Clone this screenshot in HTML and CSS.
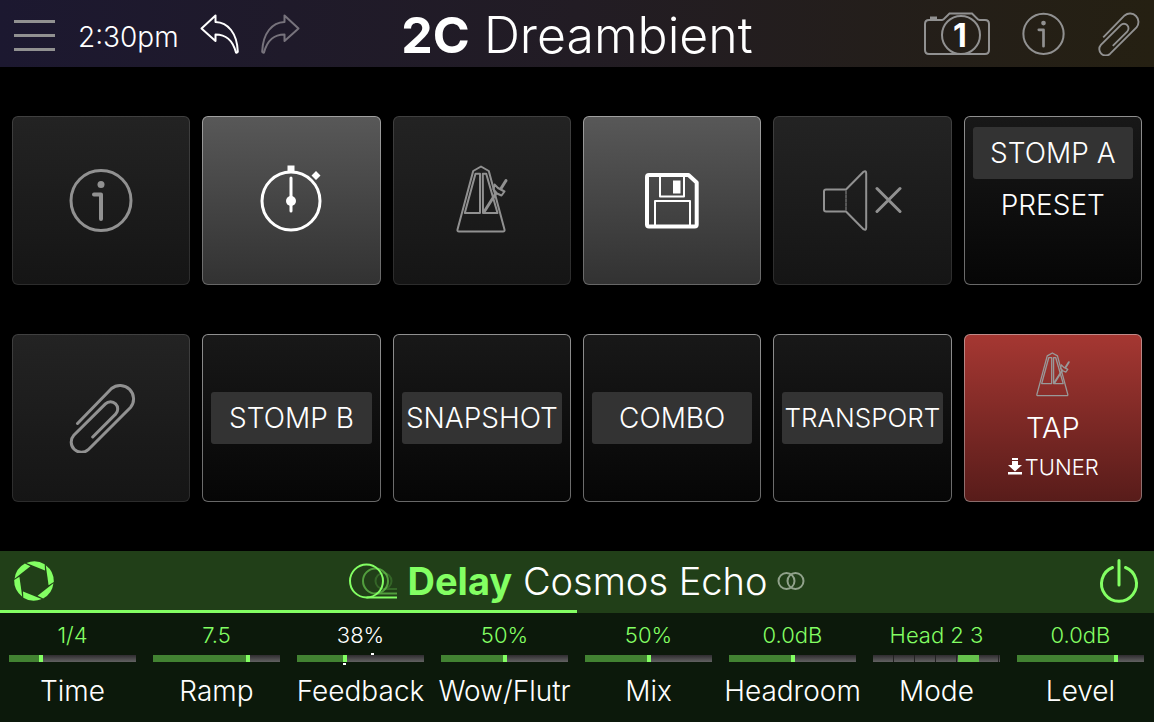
FILE: index.html
```html
<!DOCTYPE html>
<html lang="en">
<head>
<meta charset="utf-8">
<meta name="viewport" content="width=device-width, initial-scale=1">
<title>2C Dreambient</title>
<link rel="stylesheet" href="styles.css">
</head>
<body>
<svg class="defs" aria-hidden="true">
  <symbol id="info" viewBox="0 0 70 70">
    <circle cx="35" cy="35.500" r="30"/>
    <path class="stem" d="M28 29.500h7V54"/>
    <circle class="solid" cx="35" cy="19.500" r="3.500"/>
  </symbol>
  <symbol id="clip" viewBox="-2 0 70 70" overflow="visible">
    <path d="M9.500 40.500 43.500 5.500A13.500 13.500 0 0 1 62.500 24.500L20.200 66.700A10.200 10.200 0 0 1 5.800 52.300L37.400 20.900A7.200 7.200 0 0 1 47.600 31.100L24.700 54"/>
  </symbol>
  <symbol id="metronome" viewBox="0 0 70 70">
    <path d="M34 1.500 41.800 6 57.500 64.500Q58 66.500 56 66.500H12Q10 66.500 10.500 64.500L26.200 6Z"/>
    <path class="fine" d="M28.500 8.700H33V48H17.800ZM35.800 8.700H39.200L50.500 48H36Z"/>
    <path class="arm" d="M37 47 48.500 29"/>
    <path class="fine" d="M47.500 19.500 51 23 57.500 26.500 54.500 30.500 50 28.500 46.500 24.500Z"/>
    <path class="arm" d="M54 23.500 59 15.500"/>
  </symbol>
</svg>

<header class="topbar">
  <div class="side">
    <button class="icon-btn menu" aria-label="Menu"><span></span><span></span><span></span></button>
    <time class="clock">2:30pm</time>
    <button class="icon-btn undo" aria-label="Undo">
      <svg width="40" height="40" viewBox="0 0 40 40"><path d="M1.500 14.500 15.500 1.500V8C28 8.500 37 19 37.800 37.500Q37.500 39 36 38.500C32.500 25.500 26 20.500 15.500 20.500V27Z"/></svg>
    </button>
    <button class="icon-btn redo" aria-label="Redo">
      <svg width="40" height="40" viewBox="0 0 40 40"><path d="M38.500 14.500 24.500 1.500V8C12 8.500 3 19 2.200 37.500Q2.500 39 4 38.500C7.500 25.500 14 20.500 24.500 20.500V27Z"/></svg>
    </button>
  </div>
  <h1 class="preset-name"><b>2C</b> Dreambient</h1>
  <div class="side side-end">
    <button class="icon-btn camera" aria-label="Snapshot 1">
      <svg width="68" height="44" viewBox="0 0 68 44">
        <path d="M6 8H19L20.500 7.500 26.500 1.500H49L55 7.500 56.500 8H62Q66 8 66 12V38Q66 42 62 42H6Q2 42 2 38V12Q2 8 6 8Z"/>
        <circle cx="38" cy="23" r="19"/>
        <path class="solid" d="M7 4.500h7v3.500h-7z"/>
        <text x="37" y="34.500">1</text>
      </svg>
    </button>
    <button class="icon-btn" aria-label="Info"><svg class="head-info" width="47" height="47"><use href="#info"/></svg></button>
    <button class="icon-btn" aria-label="Attachment"><svg class="head-clip" width="44" height="44"><use href="#clip"/></svg></button>
  </div>
</header>

<main class="pads">
  <button class="pad dim" aria-label="Info"><svg class="glyph" width="70" height="70"><use href="#info"/></svg></button>
  <button class="pad lit" aria-label="Stopwatch">
    <svg class="glyph" width="70" height="70" viewBox="0 0 70 70">
      <circle cx="35" cy="36" r="29"/>
      <path class="solid" d="M31.500.500h7V8h-7zM60 6l4.500 4.500L60 15l-4.500-4.500z"/>
      <path d="M35 13V46"/><circle class="solid" cx="35" cy="36" r="5"/>
    </svg>
  </button>
  <button class="pad dim" aria-label="Metronome"><svg class="glyph metro" width="70" height="70"><use href="#metronome"/></svg></button>
  <button class="pad lit" aria-label="Save">
    <svg class="glyph" width="70" height="70" viewBox="0 0 70 70">
      <path class="frame" d="M12 10H51.500L59.700 17.500V59.500Q59.700 61.500 57.700 61.500H12Q10 61.500 10 59.500V12Q10 10 12 10Z"/>
      <path class="fine" d="M23 10V31.500H47V10M18 61V36H53V61"/>
      <path class="solid" d="M36 15.500h7.500v13h-7.500z"/>
    </svg>
  </button>
  <button class="pad dim" aria-label="Mute">
    <svg class="glyph mute" width="80" height="70" viewBox="0 0 80 70">
      <path d="M4 24.500H24L41.500 6.800Q44.200 5 44.200 8.500V62.500Q44.200 66 41.500 64.200L24 46.500H4Q2 46.500 2 44.500V26.500Q2 24.500 4 24.500Z"/>
      <path class="thin" d="M24 26V46" stroke-dasharray="3 1"/>
      <path class="cross" d="M55 23.500 78 46.500M78 23.500 55 46.500"/>
    </svg>
  </button>
  <button class="pad dark top"><span class="chip on">STOMP A</span><span class="chip">PRESET</span></button>

  <button class="pad dim" aria-label="Attachment"><svg class="glyph" width="70" height="70"><use href="#clip"/></svg></button>
  <button class="pad dark"><span class="chip on">STOMP B</span></button>
  <button class="pad dark"><span class="chip on">SNAPSHOT</span></button>
  <button class="pad dark"><span class="chip on">COMBO</span></button>
  <button class="pad dark"><span class="chip on tight">TRANSPORT</span></button>
  <button class="pad red">
    <svg class="glyph small-metro" width="46" height="46"><use href="#metronome"/></svg>
    <span class="tap">TAP</span>
    <span class="hold"><svg width="16" height="18" viewBox="0 0 16 18"><path d="M5 0h6v2H5zM5 3h6v4h4L8 13.500 1 7h4zM1 14h14v2.500H1z"/></svg>TUNER</span>
  </button>
</main>

<section class="block" aria-label="Delay Cosmos Echo">
  <div class="block-head">
    <button class="icon-btn aperture" aria-label="Focus">
      <svg width="42" height="42" viewBox="-21 -21 42 42">
        <path id="blade" d="M-7.700-18A20 20 0 0 1 10.700-16.700L11-10.500Z"/>
        <use href="#blade" transform="rotate(60)"/><use href="#blade" transform="rotate(120)"/>
        <use href="#blade" transform="rotate(180)"/><use href="#blade" transform="rotate(240)"/>
        <use href="#blade" transform="rotate(300)"/>
      </svg>
    </button>
    <h2 class="block-name">
      <svg class="echo" width="50" height="38" viewBox="0 0 50 38">
        <g><circle cx="18.500" cy="19" r="16.500"/><path d="M18.500 35.500H49"/></g>
        <g opacity=".5"><circle cx="27.500" cy="19" r="12.500"/><path d="M27.500 31.500H49"/></g>
        <g opacity=".2"><circle cx="35.500" cy="19" r="8"/><path d="M35.500 27H49"/></g>
      </svg>
      <span><b>Delay</b> Cosmos Echo</span>
      <svg class="stereo" width="28" height="20" viewBox="0 0 28 20"><circle cx="9.500" cy="10" r="8"/><circle cx="18.500" cy="10" r="8"/></svg>
    </h2>
    <button class="icon-btn power" aria-label="Bypass">
      <svg width="42" height="46" viewBox="0 0 42 46"><path d="M14.500 9.500A17.500 17.500 0 1 0 27.500 9.500M21 2.500V27"/></svg>
    </button>
  </div>
  <div class="pages"><span></span></div>
  <div class="params">
    <div class="param"><output for="p1">1/4</output><div class="track"><input id="p1" type="range" value="24" style="--v:24%"></div><label for="p1">Time</label></div>
    <div class="param"><output for="p2">7.5</output><div class="track"><input id="p2" type="range" value="76" style="--v:76%"></div><label for="p2">Ramp</label></div>
    <div class="param assigned"><output for="p3">38%</output><div class="track"><input id="p3" type="range" value="37" style="--v:37%"><i class="max"></i><i class="min"></i></div><label for="p3">Feedback</label></div>
    <div class="param"><output for="p4">50%</output><div class="track"><input id="p4" type="range" value="50" style="--v:50%"></div><label for="p4">Wow/Flutr</label></div>
    <div class="param"><output for="p5">50%</output><div class="track"><input id="p5" type="range" value="50" style="--v:50%"></div><label for="p5">Mix</label></div>
    <div class="param"><output for="p6">0.0dB</output><div class="track"><input id="p6" type="range" value="50" style="--v:50%"></div><label for="p6">Headroom</label></div>
    <div class="param"><output for="p7">Head 2 3</output><div class="track"><input id="p7" class="steps" type="range" min="0" max="5" value="4"></div><label for="p7">Mode</label></div>
    <div class="param"><output for="p8">0.0dB</output><div class="track"><input id="p8" type="range" value="79" style="--v:79%"></div><label for="p8">Level</label></div>
  </div>
</section>
</body>
</html>
```
FILE: styles.css
```css
:root {
  --grey: #919191;
  --green: #83ff63;
}
* { box-sizing: border-box; }
body {
  margin: 0;
  min-height: 100vh;
  display: flex;
  flex-direction: column;
  background: #000;
  color: #fff;
  font-family: Inter, "Liberation Sans", sans-serif;
  font-weight: 300;
}
button { font: inherit; color: inherit; cursor: pointer; }
svg { display: block; fill: none; }
.defs { position: absolute; width: 0; height: 0; }
.solid { fill: currentColor; stroke: none; }
.icon-btn { padding: 0; border: 0; background: none; display: block; }

/* top bar */
.topbar {
  display: grid;
  grid-template-columns: 1fr auto 1fr;
  align-items: center;
  height: 67px;
  padding: 0 14px;
  background: linear-gradient(90deg, #1c1830, #221c24 50%, #252012);
}
.side { display: flex; align-items: center; color: var(--grey); }
.side-end { justify-content: flex-end; gap: 29px; }
.side-end svg { stroke: var(--grey); stroke-width: 2; }
.menu { display: grid; gap: 11px; width: 41px; padding-top: 3px; }
.menu span { height: 3px; background: var(--grey); }
.clock { margin: 6px 21px 0 23px; font-size: 28px; line-height: 36px; color: #fff; }
.undo svg, .redo svg { stroke: #fff; stroke-width: 2; stroke-linejoin: round; }
.redo { margin-left: 20px; }
.redo svg { stroke: #77737c; }
.preset-name { margin: 0; padding-top: 2px; font-size: 50px; line-height: 64px; font-weight: 300; white-space: nowrap; }
.preset-name b, .block-name b { font-weight: 700; }
.camera text { font-size: 32px; font-weight: 700; fill: #fff; stroke: none; text-anchor: middle; }
.side-end .head-info { stroke-width: 3; }
.head-info .stem { stroke-width: 4; }
.side-end .head-clip { stroke-width: 3; }
.stem { stroke-width: 4; stroke-linecap: round; stroke-linejoin: round; }

/* pads */
.pads {
  flex: 1;
  display: grid;
  grid-template-columns: repeat(6, 1fr);
  grid-auto-rows: 1fr;
  gap: 49px 12px;
  padding: 49px 12px;
}
.pad {
  display: flex;
  flex-direction: column;
  align-items: center;
  justify-content: center;
  min-width: 0;
  padding: 10px 8px;
  border: 1px solid transparent;
  border-radius: 6px;
  background: linear-gradient(var(--a), var(--b)) padding-box, linear-gradient(var(--c), var(--d)) border-box;
}
.dim { --a: #232323; --b: #151515; --c: #404040; --d: #2c2c2c; color: var(--grey); }
.lit { --a: #585858; --b: #323232; --c: #a0a0a0; --d: #666; }
.dark { --a: #181818; --b: #060606; --c: #909090; --d: #686868; }
.red { --a: #a53732; --b: #581c1a; --c: #c08a88; --d: #8a6c6b; padding-bottom: 14px; }
.top { justify-content: flex-start; }
.glyph { stroke: currentColor; stroke-width: 3; stroke-linecap: round; stroke-linejoin: round; }
.metro, .small-metro, .mute { stroke-width: 2; }
.fine { stroke-width: 2; }
.thin { stroke-width: 1; }
.frame { stroke-width: 4; }
.arm, .cross { stroke-width: 3; }
.chip {
  align-self: stretch;
  border-radius: 3px;
  font-size: 28px;
  line-height: 52px;
  white-space: nowrap;
}
.on { background: #333; }
.tight { font-size: 26px; }
.small-metro { color: #999; }
.tap { margin-top: 12px; font-size: 29px; line-height: 36px; }
.hold { display: flex; align-items: center; gap: 2px; margin-top: 8px; font-size: 22px; line-height: 26px; }
.hold svg { fill: #fff; }

/* selected block */
.block { background: #0c190b; }
.block-head {
  display: grid;
  grid-template-columns: 1fr auto 1fr;
  align-items: center;
  height: 59px;
  padding: 0 14px 0 13px;
  background: #213f18;
}
.aperture svg { fill: var(--green); }
.power { justify-self: end; }
.power svg { stroke: var(--green); stroke-width: 3; stroke-linecap: round; }
.block-name { display: flex; align-items: center; gap: 10px; margin: 0; font-size: 38px; line-height: 50px; font-weight: 300; white-space: nowrap; }
.block-name b { color: var(--green); }
.echo { stroke: var(--green); stroke-width: 2; }
.stereo { stroke: #91a28b; stroke-width: 2; }
.pages { height: 3px; background: #213f18; }
.pages span { display: block; width: 50%; height: 3px; background: var(--green); }
.params {
  display: grid;
  grid-template-columns: repeat(8, 1fr);
  gap: 17px;
  padding: 9px 10px 14px 9px;
}
.param { display: flex; flex-direction: column; align-items: center; min-width: 0; }
.param output { font-size: 22px; line-height: 26px; color: var(--green); }
.assigned output { color: #fff; }
.param label { font-size: 28px; line-height: 34px; white-space: nowrap; }
.track { position: relative; width: 100%; margin: 7px 0 12px; }
.track input {
  appearance: none;
  display: block;
  width: 100%;
  height: 7px;
  margin: 0;
  background: linear-gradient(90deg, #428232 var(--v), transparent var(--v)), linear-gradient(#2f2c30, #626262);
}
.track input::-webkit-slider-thumb { appearance: none; width: 4px; height: 7px; background: var(--green); }
.track .steps {
  background:
    linear-gradient(#65c24c, #65c24c) 80% 0 / 21px 7px no-repeat,
    repeating-linear-gradient(90deg, transparent 0 20px, #222 20px 21px),
    linear-gradient(#2f2c30, #626262);
}
.track .steps::-webkit-slider-thumb { background: none; }
.track i { position: absolute; width: 3px; height: 2px; background: #fff; }
.max { left: 58%; top: -2px; }
.min { left: 36%; bottom: -3px; }
```
